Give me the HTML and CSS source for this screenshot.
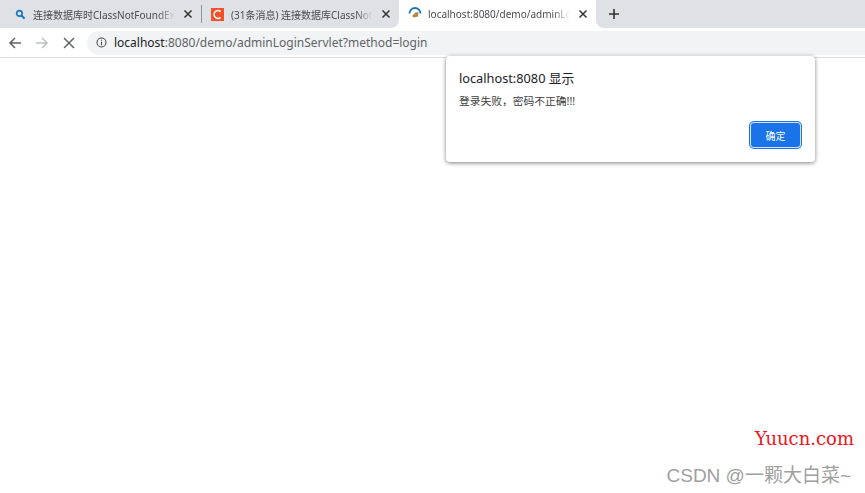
FILE: index.html
```html
<!DOCTYPE html>
<html lang="zh">
<head>
    <meta charset="UTF-8">
    <title>localhost:8080/demo/adminLoginServlet?method=login</title>
    <link rel="stylesheet" href="styles.css">
</head>
<body>
    <div class="tabstrip">
        <div class="tab tab-first">
            <svg class="favicon favicon-search" viewBox="0 0 12 12"><circle cx="4.8" cy="4.8" r="3" fill="none" stroke="#1a73c8" stroke-width="1.8"/><path d="M7 7L10.5 10.5" stroke="#1a73c8" stroke-width="2.2"/></svg>
            <span class="tab-title">连接数据库时ClassNotFoundException</span>
            <svg class="tab-close" viewBox="0 0 10 10"><path d="M1.5 1.5L8.5 8.5M8.5 1.5L1.5 8.5" stroke="#333" stroke-width="1.5"/></svg>
        </div>
        <div class="tab-sep-wrap"><div class="tab-sep"></div></div>
        <div class="tab tab-second">
            <svg class="favicon" viewBox="0 0 13 13"><rect width="13" height="13" fill="#f4502a"/><path d="M9.6 3.6A3.9 3.9 0 1 0 9.6 9.4" fill="none" stroke="#fff" stroke-width="1.6"/></svg>
            <span class="tab-title">(31条消息) 连接数据库ClassNotFoundException</span>
            <svg class="tab-close" viewBox="0 0 10 10"><path d="M1.5 1.5L8.5 8.5M8.5 1.5L1.5 8.5" stroke="#333" stroke-width="1.5"/></svg>
        </div>
        <div class="tab tab-active">
            <svg class="favicon favicon-app" viewBox="0 0 14 14"><path d="M1.5 7.5A5.5 5.5 0 0 1 12.5 7.5" fill="none" stroke="#1a73c8" stroke-width="1.8"/><path d="M4 10L7.5 6.5L10.5 6L10 10.5L6 11.5Z" fill="#b0893f"/></svg>
            <span class="tab-title">localhost:8080/demo/adminLoginServlet</span>
            <svg class="tab-close" viewBox="0 0 10 10"><path d="M1.5 1.5L8.5 8.5M8.5 1.5L1.5 8.5" stroke="#333" stroke-width="1.5"/></svg>
        </div>
        <div class="tab-rest">
            <svg class="new-tab" viewBox="0 0 12 12"><path d="M6 1V11M1 6H11" stroke="#333" stroke-width="1.6"/></svg>
        </div>
    </div>
    <div class="toolbar">
        <svg class="nav-icon" viewBox="0 0 14 14"><path d="M13 7H2M7 2L2 7L7 12" fill="none" stroke="#5f6368" stroke-width="1.5"/></svg>
        <svg class="nav-icon" viewBox="0 0 14 14"><path d="M1 7H12M7 2L12 7L7 12" fill="none" stroke="#bdc1c6" stroke-width="1.5"/></svg>
        <svg class="nav-icon" viewBox="0 0 14 14"><path d="M2 2L12 12M12 2L2 12" stroke="#5f6368" stroke-width="1.5"/></svg>
        <div class="omnibox">
            <svg class="info-icon" viewBox="0 0 12 12"><circle cx="6" cy="6" r="4.9" fill="none" stroke="#444" stroke-width="1.1"/><path d="M6 5.2V9M6 3V4.2" stroke="#444" stroke-width="1.2"/></svg>
            <span class="url"><span class="url-host">localhost</span>:8080/demo/adminLoginServlet?method=login</span>
        </div>
    </div>
    <main class="viewport">
        <div class="dialog">
            <div class="dialog-title">localhost:8080 显示</div>
            <div class="dialog-msg">登录失败，密码不正确!!!</div>
            <div class="dialog-actions">
                <button class="ok-btn">确定</button>
            </div>
        </div>
        <div class="wm-yuucn">Yuucn.com</div>
        <div class="wm-csdn">CSDN @一颗大白菜~</div>
    </main>
</body>
</html>
```

FILE: styles.css
```css
body {
    margin: 0;
    background: #fff;
    font-family: "Noto Sans", "Noto Sans CJK SC", sans-serif;
    height: 493px;
    overflow: hidden;
    display: flex;
    flex-direction: column;
}

.tabstrip {
    height: 28px;
    display: flex;
    align-items: center;
    flex-shrink: 0;
}

.tab {
    height: 28px;
    box-sizing: border-box;
    display: flex;
    align-items: center;
    gap: 7px;
    flex-shrink: 0;
    background: #dee1e6;
}

.tab-first {
    width: 201px;
    padding: 0 8px 0 15px;
}

.tab-second {
    width: 197px;
    padding: 0 8px 0 9px;
    border-bottom-right-radius: 8px;
}

.tab-active {
    width: 197px;
    padding: 0 8px 0 9px;
    background: #fff;
    border-radius: 8px 8px 0 0;
}

.tab-rest {
    flex: 1;
    height: 28px;
    background: #dee1e6;
    border-bottom-left-radius: 8px;
    display: flex;
    align-items: center;
}

.tab-sep-wrap {
    width: 1px;
    height: 28px;
    background: #dee1e6;
    display: flex;
    align-items: center;
    flex-shrink: 0;
}

.tab-sep {
    width: 1px;
    height: 18px;
    background: #8f9296;
}

.favicon {
    width: 13px;
    height: 13px;
    flex-shrink: 0;
}

.favicon-search {
    width: 11px;
    height: 11px;
}

.favicon-app {
    width: 14px;
    height: 14px;
    margin-top: -3px;
    margin-right: -1px;
}

.tab-title {
    flex: 1;
    min-width: 0;
    font-size: 10px;
    color: #4a4c50;
    white-space: nowrap;
    overflow: hidden;
    -webkit-mask-image: linear-gradient(to right, #000 88%, transparent);
    mask-image: linear-gradient(to right, #000 88%, transparent);
}

.tab-close {
    width: 10px;
    height: 10px;
    flex-shrink: 0;
    margin-left: 1px;
}

.new-tab {
    width: 12px;
    height: 12px;
    margin-left: 12px;
}

.toolbar {
    height: 30px;
    box-sizing: border-box;
    border-bottom: 1px solid #dadce0;
    display: flex;
    align-items: center;
    padding-left: 8px;
    gap: 13px;
    flex-shrink: 0;
}

.nav-icon {
    width: 14px;
    height: 14px;
}

.omnibox {
    flex: 1;
    height: 24px;
    background: #f1f3f4;
    border-radius: 12px 0 0 12px;
    display: flex;
    align-items: center;
    padding-left: 9px;
    gap: 7px;
    margin-left: -2px;
}

.info-icon {
    width: 11px;
    height: 11px;
}

.url {
    font-size: 12px;
    color: #5f6368;
}

.url-host {
    color: #202124;
}

.viewport {
    flex: 1;
    position: relative;
}

.dialog {
    position: absolute;
    left: 446px;
    top: -2px;
    width: 369px;
    height: 106px;
    box-sizing: border-box;
    background: #fff;
    border-radius: 4px;
    box-shadow: 0 1px 4px rgba(0, 0, 0, 0.5);
    padding: 14px 15px 0 13px;
}

.dialog-title {
    font-size: 12.75px;
    line-height: 17px;
    color: #202124;
}

.dialog-msg {
    font-size: 10.75px;
    line-height: 15px;
    margin-top: 7px;
    color: #3c3c3c;
}

.dialog-actions {
    display: flex;
    justify-content: flex-end;
    margin-top: 14px;
}

.ok-btn {
    width: 49px;
    height: 24px;
    padding: 0;
    background: #1a73e8;
    border: none;
    border-radius: 3px;
    color: #fff;
    font-family: inherit;
    font-size: 10px;
    box-shadow: 0 0 0 1px #d5e4fb, 0 0 0 2px #1a73e8;
}

.wm-yuucn {
    position: absolute;
    right: 11px;
    top: 370px;
    font-family: "DejaVu Serif", serif;
    font-size: 18px;
    color: #f01420;
}

.wm-csdn {
    position: absolute;
    right: 14px;
    top: 402px;
    font-family: "Liberation Sans", "Noto Sans CJK SC", sans-serif;
    font-size: 19px;
    color: #a0a0a0;
}
```
